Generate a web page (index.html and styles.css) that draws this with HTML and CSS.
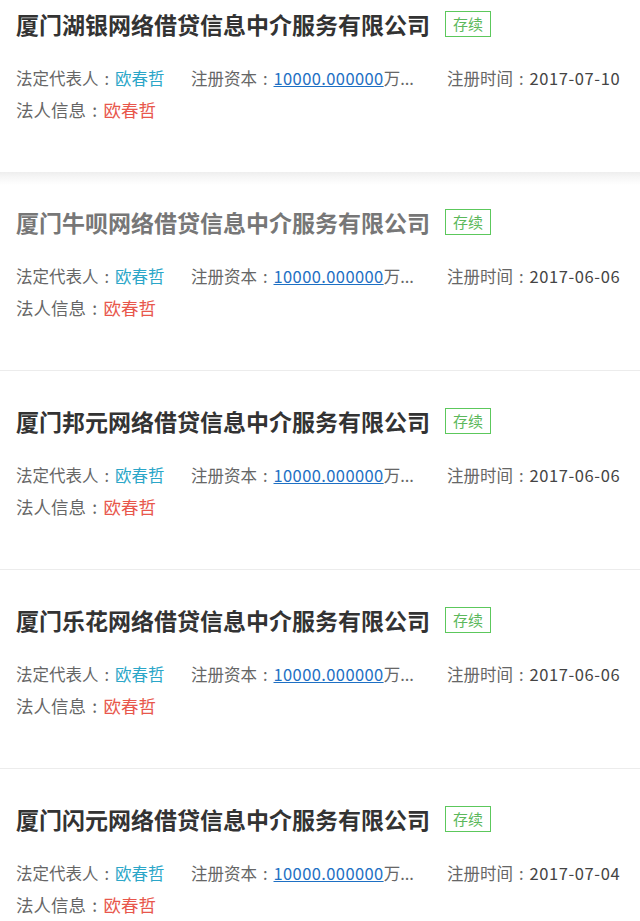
FILE: index.html
```html
<!DOCTYPE html>
<html lang="zh-CN">
<head>
    <meta charset="UTF-8">
    <meta name="viewport" content="width=device-width, initial-scale=1.0">
    <title>企业列表</title>
    <link rel="stylesheet" href="styles.css">
</head>
<body>
    <div class="company-list">
        <div class="card first">
            <div class="card-title">
                <span class="name">厦门湖银网络借贷信息中介服务有限公司</span>
                <span class="status">存续</span>
            </div>
            <div class="info-row">
                <span class="col col-rep">法定代表人<span class="colon">:</span><span class="person">欧春哲</span></span>
                <span class="col col-cap">注册资本<span class="colon">:</span><a class="money" href="#">10000.000000</a>万...</span>
                <span class="col col-date">注册时间<span class="colon">:</span><span class="date">2017-07-10</span></span>
            </div>
            <div class="info-row legal-row">
                <span class="col">法人信息<span class="colon">:</span><span class="legal">欧春哲</span></span>
            </div>
        </div>

        <div class="card shaded visited">
            <div class="card-title">
                <span class="name">厦门牛呗网络借贷信息中介服务有限公司</span>
                <span class="status">存续</span>
            </div>
            <div class="info-row">
                <span class="col col-rep">法定代表人<span class="colon">:</span><span class="person">欧春哲</span></span>
                <span class="col col-cap">注册资本<span class="colon">:</span><a class="money" href="#">10000.000000</a>万...</span>
                <span class="col col-date">注册时间<span class="colon">:</span><span class="date">2017-06-06</span></span>
            </div>
            <div class="info-row legal-row">
                <span class="col">法人信息<span class="colon">:</span><span class="legal">欧春哲</span></span>
            </div>
        </div>

        <div class="card">
            <div class="card-title">
                <span class="name">厦门邦元网络借贷信息中介服务有限公司</span>
                <span class="status">存续</span>
            </div>
            <div class="info-row">
                <span class="col col-rep">法定代表人<span class="colon">:</span><span class="person">欧春哲</span></span>
                <span class="col col-cap">注册资本<span class="colon">:</span><a class="money" href="#">10000.000000</a>万...</span>
                <span class="col col-date">注册时间<span class="colon">:</span><span class="date">2017-06-06</span></span>
            </div>
            <div class="info-row legal-row">
                <span class="col">法人信息<span class="colon">:</span><span class="legal">欧春哲</span></span>
            </div>
        </div>

        <div class="card">
            <div class="card-title">
                <span class="name">厦门乐花网络借贷信息中介服务有限公司</span>
                <span class="status">存续</span>
            </div>
            <div class="info-row">
                <span class="col col-rep">法定代表人<span class="colon">:</span><span class="person">欧春哲</span></span>
                <span class="col col-cap">注册资本<span class="colon">:</span><a class="money" href="#">10000.000000</a>万...</span>
                <span class="col col-date">注册时间<span class="colon">:</span><span class="date">2017-06-06</span></span>
            </div>
            <div class="info-row legal-row">
                <span class="col">法人信息<span class="colon">:</span><span class="legal">欧春哲</span></span>
            </div>
        </div>

        <div class="card">
            <div class="card-title">
                <span class="name">厦门闪元网络借贷信息中介服务有限公司</span>
                <span class="status">存续</span>
            </div>
            <div class="info-row">
                <span class="col col-rep">法定代表人<span class="colon">:</span><span class="person">欧春哲</span></span>
                <span class="col col-cap">注册资本<span class="colon">:</span><a class="money" href="#">10000.000000</a>万...</span>
                <span class="col col-date">注册时间<span class="colon">:</span><span class="date">2017-07-04</span></span>
            </div>
            <div class="info-row legal-row">
                <span class="col">法人信息<span class="colon">:</span><span class="legal">欧春哲</span></span>
            </div>
        </div>
    </div>
</body>
</html>
```

FILE: styles.css
```css
body {
    margin: 0;
    background: #fff;
    font-family: "Noto Sans CJK SC", "Noto Sans", sans-serif;
    color: #666;
    overflow: hidden;
}

.company-list {
    display: flex;
    flex-direction: column;
}

.card {
    padding: 34px 16px 47px;
    border-bottom: 1px solid #ececec;
    box-shadow: 0 1px 2px rgba(0,0,0,0.03);
    background: #fff;
}

/* list is scrolled a little, top of first card is off screen */
.card.first {
    margin-top: -26px;
    border-bottom: none;
    box-shadow: none;
}

.card.shaded {
    background: linear-gradient(#eeeeee 0, #f6f6f6 5px, #fff 13px);
}

.card-title {
    display: flex;
    align-items: center;
    height: 32px;
}

.card-title .name {
    font-size: 23px;
    font-weight: 700;
    color: #333;
    line-height: 32px;
}

.card.visited .card-title .name {
    color: #777;
}

.status {
    margin-left: 15px;
    height: 24px;
    padding: 0 7px;
    border: 1.5px solid #5cc85c;
    color: #5cb85c;
    font-size: 15px;
    line-height: 24px;
}

.card-title + .info-row {
    margin-top: 23px;
}

.info-row {
    display: flex;
    font-size: 16.5px;
    line-height: 31px;
    white-space: nowrap;
}

.info-row.legal-row {
    font-size: 17.5px;
}

/* colon takes a full em, centred */
.colon {
    display: inline-block;
    width: 1em;
    text-align: center;
}

.col-rep {
    width: 175px;
}

.col-cap {
    width: 256px;
}

.person {
    color: #2ba6c8;
}

.legal {
    color: #e8574c;
}

.money {
    color: #1e70c4;
    text-decoration: underline;
    letter-spacing: 0.4px;
}

.date {
    color: #444;
    letter-spacing: 0.6px;
}
```
